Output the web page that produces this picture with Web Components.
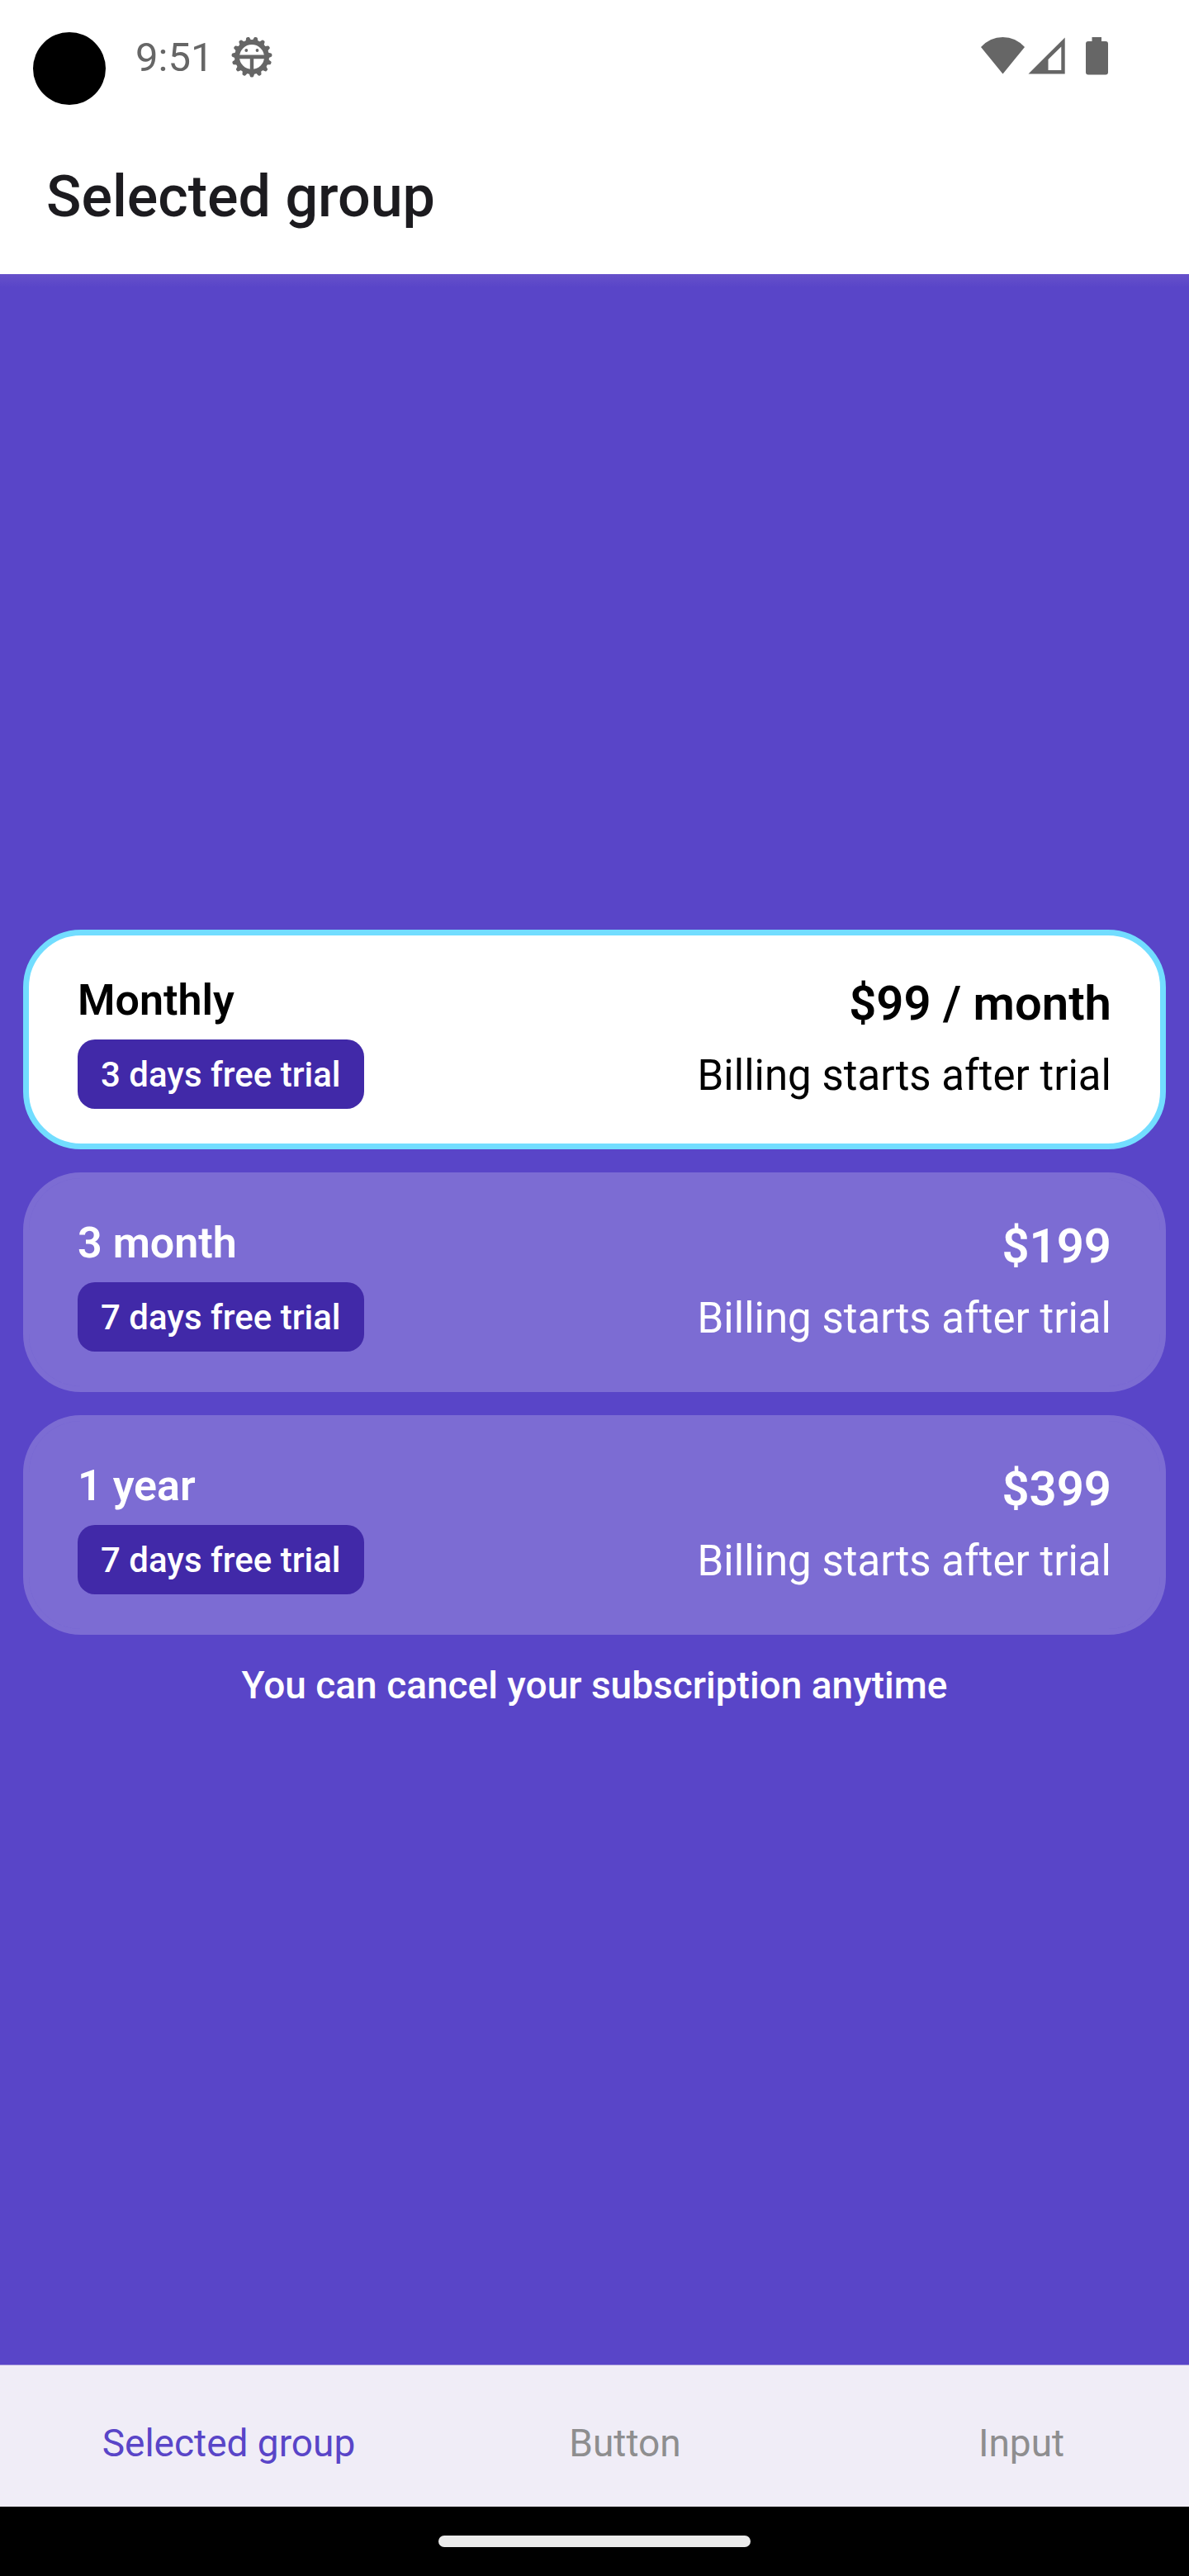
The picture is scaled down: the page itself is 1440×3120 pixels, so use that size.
<!DOCTYPE html>
<html lang="en">
<head>
<meta charset="utf-8">
<meta name="viewport" content="width=device-width, initial-scale=1">
<title>Selected group</title>
<style>
  html, body { margin: 0; }
  body {
    font-family: Roboto, "Liberation Sans", sans-serif;
    --purple: #5945c8;
    --purple-dark: #4129a8;
    --cyan: #72ddff;
    --glyph: #666;
  }
</style>
</head>
<body>
<app-screen>
  <status-bar slot="top" time="9:51"></status-bar>
  <title-bar slot="top">Selected group</title-bar>
  <plan-group>
    <plan-option name="Monthly" trial="3 days free trial" price="$99 / month" note="Billing starts after trial" checked></plan-option>
    <plan-option name="3 month" trial="7 days free trial" price="$199" note="Billing starts after trial"></plan-option>
    <plan-option name="1 year" trial="7 days free trial" price="$399" note="Billing starts after trial"></plan-option>
    <span slot="footnote">You can cancel your subscription anytime</span>
  </plan-group>
  <tab-bar slot="bottom">
    <tab-item selected>Selected group</tab-item>
    <tab-item>Button</tab-item>
    <tab-item>Input</tab-item>
  </tab-bar>
  <gesture-bar slot="bottom"></gesture-bar>
</app-screen>

<script>
const define = (tag, html, setup) => customElements.define(tag, class extends HTMLElement {
  constructor() {
    super();
    this.attachShadow({ mode: "open" }).innerHTML = html;
  }
  connectedCallback() { if (setup) setup(this, this.shadowRoot); }
});

define("app-screen", `
  <style>
    :host { display: flex; flex-direction: column; min-height: 100vh; background: var(--purple); }
    header { background: #fff; }
    main {
      flex: 1; display: flex; flex-direction: column; justify-content: center; padding: 0 28px;
      background: linear-gradient(#6651ca, var(--purple) 16px);
    }
  </style>
  <header><slot name="top"></slot></header>
  <main><slot></slot></main>
  <footer><slot name="bottom"></slot></footer>`);

define("status-bar", `
  <style>
    :host {
      display: flex; align-items: center; box-sizing: border-box; height: 144px;
      padding: 0 96px 4px 164px; position: relative; color: var(--glyph);
    }
    .camera { position: absolute; left: 40px; top: 39px; width: 88px; height: 88px; border-radius: 50%; background: #000; }
    time { font-size: 49px; line-height: 58px; margin-right: 22px; }
    svg { display: block; fill: currentColor; }
    .system { margin-left: auto; }
  </style>
  <span class="camera"></span>
  <time></time>
  <svg class="gear" width="50" height="50" viewBox="-25 -24 50 50" aria-hidden="true">
    <path class="teeth" stroke="currentColor" stroke-width="3" stroke-linejoin="round"/>
    <circle r="18" fill="none" stroke="currentColor" stroke-width="6"/>
    <path d="M-16-2.500H16V2.300H-16zM-2.200 0H2.200V17H-2.200z"/>
    <circle cx="-6.700" cy="-8" r="1.900"/><circle cx="6.500" cy="-8" r="1.900"/>
  </svg>
  <svg class="system" width="156" height="50" viewBox="0 1 156 50" aria-hidden="true">
    <path d="M0 13Q11 1 26.500 1T53 13L26.500 45.500z"/>
    <path fill-rule="evenodd" d="M57.500 45.500L101.700 1.500V45.500zM81.500 41H97.300V12.500L81.500 28z"/>
    <path d="M134.500 1H146V6H151Q154 6 154 9V43.500Q154 46.500 151 46.500H130Q127 46.500 127 43.500V9Q127 6 130 6H134.500z"/>
  </svg>`,
  (host, root) => {
    root.querySelector("time").textContent = host.getAttribute("time");
    const point = (radius, angle) => `${(radius * Math.sin(angle)).toFixed(2)} ${(radius * Math.cos(angle)).toFixed(2)}`;
    let d = "";
    for (let i = 0; i < 15; i++) {
      const a = i * 2 * Math.PI / 15;
      d += `M${point(18, a - 0.14)}L${point(23, a - 0.03)}L${point(23, a + 0.03)}L${point(18, a + 0.14)}z`;
    }
    root.querySelector(".teeth").setAttribute("d", d);
  });

define("title-bar", `
  <style>
    :host { display: flex; align-items: center; height: 188px; padding: 0 56px; color: #1c1b1f; }
    h1 { margin: 0; font-size: 70px; line-height: 84px; font-weight: 500; }
  </style>
  <h1><slot></slot></h1>`);

define("plan-group", `
  <style>
    :host { display: block; }
    fieldset { display: flex; flex-direction: column; gap: 28px; margin: 0; padding: 0; border: 0; min-width: 0; }
    p { margin: 32px 0 0; color: #fff; font-size: 46px; line-height: 58px; font-weight: 500; text-align: center; }
  </style>
  <fieldset aria-label="Plan"><slot></slot></fieldset>
  <p><slot name="footnote"></slot></p>`,
  (host) => host.addEventListener("plan-picked", (e) => {
    for (const option of host.querySelectorAll("plan-option")) option.toggleChecked(option === e.target);
  }));

customElements.define("plan-option", class extends HTMLElement {
  constructor() {
    super();
    this.attachShadow({ mode: "open" }).innerHTML = `
      <style>
        :host { display: block; color: #fff; }
        :host([checked]) { color: #000; }
        label {
          display: flex; justify-content: space-between; align-items: center; box-sizing: border-box;
          min-height: 266px; padding: 0 59px; border: 7px solid rgba(255, 255, 255, .21); border-radius: 70px;
          background: rgba(255, 255, 255, .21) padding-box; position: relative; cursor: pointer;
        }
        :host([checked]) label { background: #fff; border-color: var(--cyan); }
        input { position: absolute; inset: 0; width: 100%; height: 100%; margin: 0; opacity: 0; }
        .left, .right { display: flex; flex-direction: column; align-items: flex-start; }
        .left { gap: 10px; }
        .right { align-items: flex-end; }
        .name { font-size: 52px; line-height: 74px; font-weight: 600; }
        .trial {
          padding: 8px 28px 6px; border-radius: 21px; background: var(--purple-dark); color: #fff;
          font-size: 42px; line-height: 70px; font-weight: 500;
        }
        .price { font-size: 58px; line-height: 88px; font-weight: 600; }
        .note { font-size: 51px; line-height: 88px; }
      </style>
      <label>
        <input type="radio" name="plan">
        <span class="left"><span class="name"></span><span class="trial"></span></span>
        <span class="right"><span class="price"></span><span class="note"></span></span>
      </label>`;
    this.input = this.shadowRoot.querySelector("input");
    this.input.addEventListener("change", () =>
      this.dispatchEvent(new CustomEvent("plan-picked", { bubbles: true })));
  }
  connectedCallback() {
    for (const key of ["name", "trial", "price", "note"])
      this.shadowRoot.querySelector("." + key).textContent = this.getAttribute(key);
    this.input.checked = this.hasAttribute("checked");
  }
  toggleChecked(on) {
    this.toggleAttribute("checked", on);
    this.input.checked = on;
  }
});

define("tab-bar", `
  <style>
    :host { display: block; background: #f0edf7; border-top: 1px solid #b5a9e0; }
    nav { display: flex; height: 171px; }
  </style>
  <nav><slot></slot></nav>`,
  (host) => host.addEventListener("click", (e) => {
    const picked = e.target.closest("tab-item");
    if (picked) for (const tab of host.querySelectorAll("tab-item")) tab.toggleAttribute("selected", tab === picked);
  }));

define("tab-item", `
  <style>
    :host { flex: 1 1 0; display: flex; color: #8e8e8f; }
    :host([selected]) { color: var(--purple); }
    button {
      flex: 1; margin: 0; padding: 16px 0 0 74px; border: 0; background: none; color: inherit;
      font: 400 46px/58px Roboto, "Liberation Sans", sans-serif; white-space: nowrap; cursor: pointer;
    }
  </style>
  <button type="button"><slot></slot></button>`);

define("gesture-bar", `
  <style>
    :host { display: flex; align-items: center; justify-content: center; height: 84px; background: #000; }
    span { width: 378px; height: 14px; border-radius: 7px; background: #ebebeb; }
  </style>
  <span></span>`);
</script>
</body>
</html>
